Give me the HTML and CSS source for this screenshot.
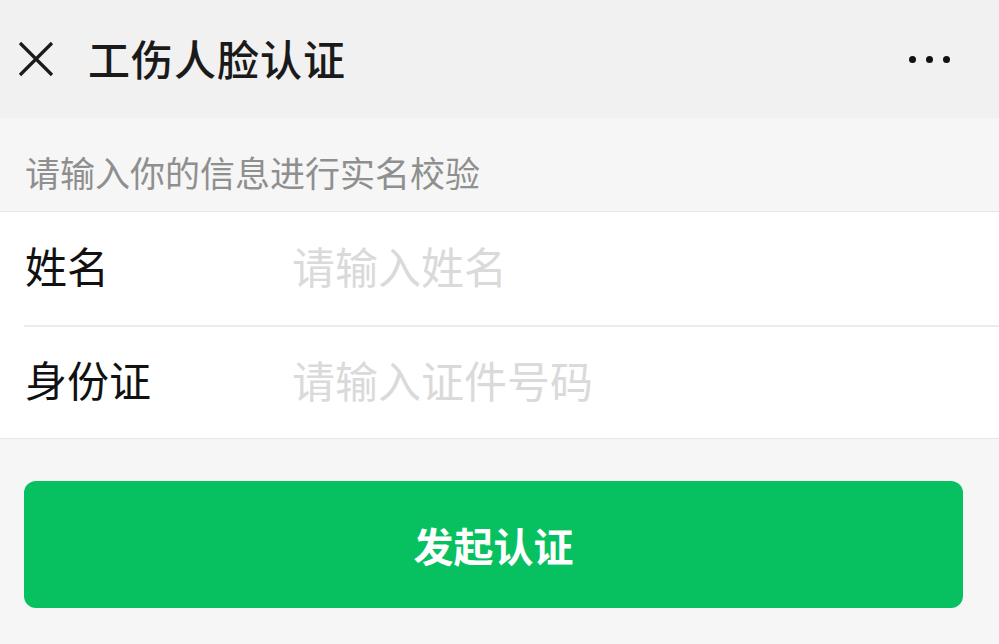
FILE: index.html
```html
<!DOCTYPE html>
<html lang="zh-CN">
<head>
<meta charset="utf-8">
<title>工伤人脸认证</title>
<link rel="stylesheet" href="styles.css">
</head>
<body>
<header class="topbar">
  <svg class="close" width="36" height="36" viewBox="0 0 36 36"><path d="M2 2 L34 34 M34 2 L2 34" stroke="#1a1a1a" stroke-width="3.2" fill="none"/></svg>
  <h1 class="title">工伤人脸认证</h1>
  <div class="more"><span></span><span></span><span></span></div>
</header>
<div class="hint">请输入你的信息进行实名校验</div>
<section class="form">
  <div class="row">
    <label class="label">姓名</label>
    <span class="placeholder">请输入姓名</span>
  </div>
  <div class="row">
    <label class="label">身份证</label>
    <span class="placeholder">请输入证件号码</span>
  </div>
</section>
<div class="actions">
  <button class="btn">发起认证</button>
</div>
</body>
</html>
```
FILE: styles.css
```css
* { box-sizing: border-box; }
html, body { margin: 0; padding: 0; }
body {
  background: #f6f6f6;
  font-family: "Noto Sans CJK SC", "Noto Sans", sans-serif;
  width: 999px;
  height: 644px;
  overflow: hidden;
}
.topbar {
  height: 118px;
  background: #f1f1f1;
  display: flex;
  align-items: center;
  padding: 0 0 0 18px;
}
.close { flex: none; margin-top: 0; }
.title {
  margin: 0 0 0 34px;
  font-size: 42px;
  font-weight: 500;
  color: #1a1a1a;
  letter-spacing: 1px;
  flex: 1;
  line-height: 1;
  transform: translateY(-1px);
}
.more {
  display: flex;
  gap: 10px;
  margin-right: 49px;
}
.more span {
  width: 7px;
  height: 7px;
  border-radius: 50%;
  background: #111;
}
.hint {
  height: 94px;
  display: flex;
  align-items: center;
  padding-left: 25px;
  font-size: 35px;
  color: #8f8f8f;
  letter-spacing: 0;
  border-bottom: 1px solid #e6e6e6;
  padding-top: 14px;
}
.form {
  background: #fff;
  padding-left: 24px;
  border-bottom: 1px solid #e6e6e6;
}
.row {
  height: 113px;
  display: flex;
  align-items: center;
  padding-bottom: 8px;
}
.row + .row { border-top: 2px solid #ececec; }
.label {
  width: 268px;
  color: #111;
  padding-left: 1px;
  font-size: 42px;
}
.placeholder {
  color: #dadada;
  font-size: 43px;
}
.actions {
  padding: 42px 36px 0 24px;
}
.btn {
  display: block;
  width: 939px;
  height: 127px;
  border: none;
  border-radius: 12px;
  background: #07c160;
  color: #fff;
  font-family: inherit;
  font-size: 40px;
  font-weight: 700;
  letter-spacing: 0;
}
```
